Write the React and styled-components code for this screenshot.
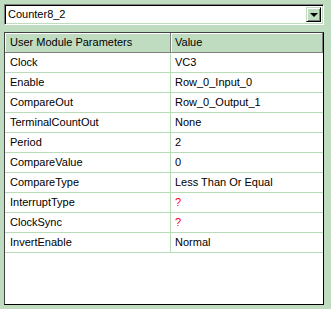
import React from 'react'
import styled, { createGlobalStyle } from 'styled-components'

const params = [
  { name: 'Clock', value: 'VC3' },
  { name: 'Enable', value: 'Row_0_Input_0' },
  { name: 'CompareOut', value: 'Row_0_Output_1' },
  { name: 'TerminalCountOut', value: 'None' },
  { name: 'Period', value: '2' },
  { name: 'CompareValue', value: '0' },
  { name: 'CompareType', value: 'Less Than Or Equal' },
  { name: 'InterruptType', value: '?', unset: true },
  { name: 'ClockSync', value: '?', unset: true },
  { name: 'InvertEnable', value: 'Normal' },
]

const GlobalStyle = createGlobalStyle`
  html, body {
    margin: 0;
    padding: 0;
    background: #c0dcc0;
  }
  body {
    font-family: 'Liberation Sans', Arial, sans-serif;
    font-size: 11px;
    color: #000;
  }
`

const Page = styled.div`
  box-sizing: border-box;
  width: 331px;
  height: 309px;
  padding: 4px 7px 4px 4px;
  display: flex;
  flex-direction: column;
  gap: 7px;
`

const ComboBox = styled.div`
  height: 21px;
  flex: none;
  box-sizing: border-box;
  display: flex;
  align-items: center;
  background: #fff;
  border: 1px solid;
  border-color: #808080 #fff #fff #808080;
  box-shadow: inset 1px 1px 0 #000, inset -1px -1px 0 #c0dcc0;
  padding: 0 2px;
`

const ComboText = styled.span`
  flex: 1;
  padding-left: 1px;
  line-height: 17px;
`

const DropButton = styled.div`
  width: 15px;
  height: 15px;
  box-sizing: border-box;
  display: flex;
  align-items: center;
  justify-content: center;
  background: #c0dcc0;
  border: 1px solid;
  border-color: #c0dcc0 #000 #000 #c0dcc0;
  box-shadow: inset 1px 1px 0 #fff, inset -1px -1px 0 #808080;
`

const Arrow = styled.div`
  width: 0;
  height: 0;
  border-left: 4px solid transparent;
  border-right: 4px solid transparent;
  border-top: 4px solid #000;
  margin-top: 1px;
`

const Grid = styled.div`
  flex: 1;
  box-sizing: border-box;
  background: #fff;
  border: 1px solid #000;
  border-top-color: #404040;
  border-left-color: #404040;
`

const HeaderRow = styled.div`
  display: grid;
  grid-template-columns: 166px 1fr;
  height: 20px;
  background: #c0dcc0;
`

const HeaderCell = styled.div`
  display: flex;
  align-items: center;
  padding: 0 0 1px ${p => (p.$first ? '5px' : '4px')};
  box-sizing: border-box;
  border-right: 1px solid #808080;
  border-bottom: 1px solid #808080;
  box-shadow: inset 1px 1px 0 #fff;
`

const Row = styled.div`
  display: grid;
  grid-template-columns: 166px 1fr;
  height: 20px;
`

const Cell = styled.div`
  display: flex;
  align-items: center;
  box-sizing: border-box;
  padding: 0 0 1px ${p => (p.$first ? '5px' : '4px')};
  border-bottom: 1px solid #b8dcb8;
  border-right: ${p => (p.$first ? '1px solid #b8dcb8' : 'none')};
  color: ${p => (p.$unset ? '#ff0000' : '#000')};
  white-space: nowrap;
`

export default function App() {
  return (
    <>
      <GlobalStyle />
      <Page>
        <ComboBox>
          <ComboText>Counter8_2</ComboText>
          <DropButton>
            <Arrow />
          </DropButton>
        </ComboBox>
        <Grid>
          <HeaderRow>
            <HeaderCell $first>User Module Parameters</HeaderCell>
            <HeaderCell>Value</HeaderCell>
          </HeaderRow>
          {params.map(p => (
            <Row key={p.name}>
              <Cell $first>{p.name}</Cell>
              <Cell $unset={p.unset}>{p.value}</Cell>
            </Row>
          ))}
        </Grid>
      </Page>
    </>
  )
}
